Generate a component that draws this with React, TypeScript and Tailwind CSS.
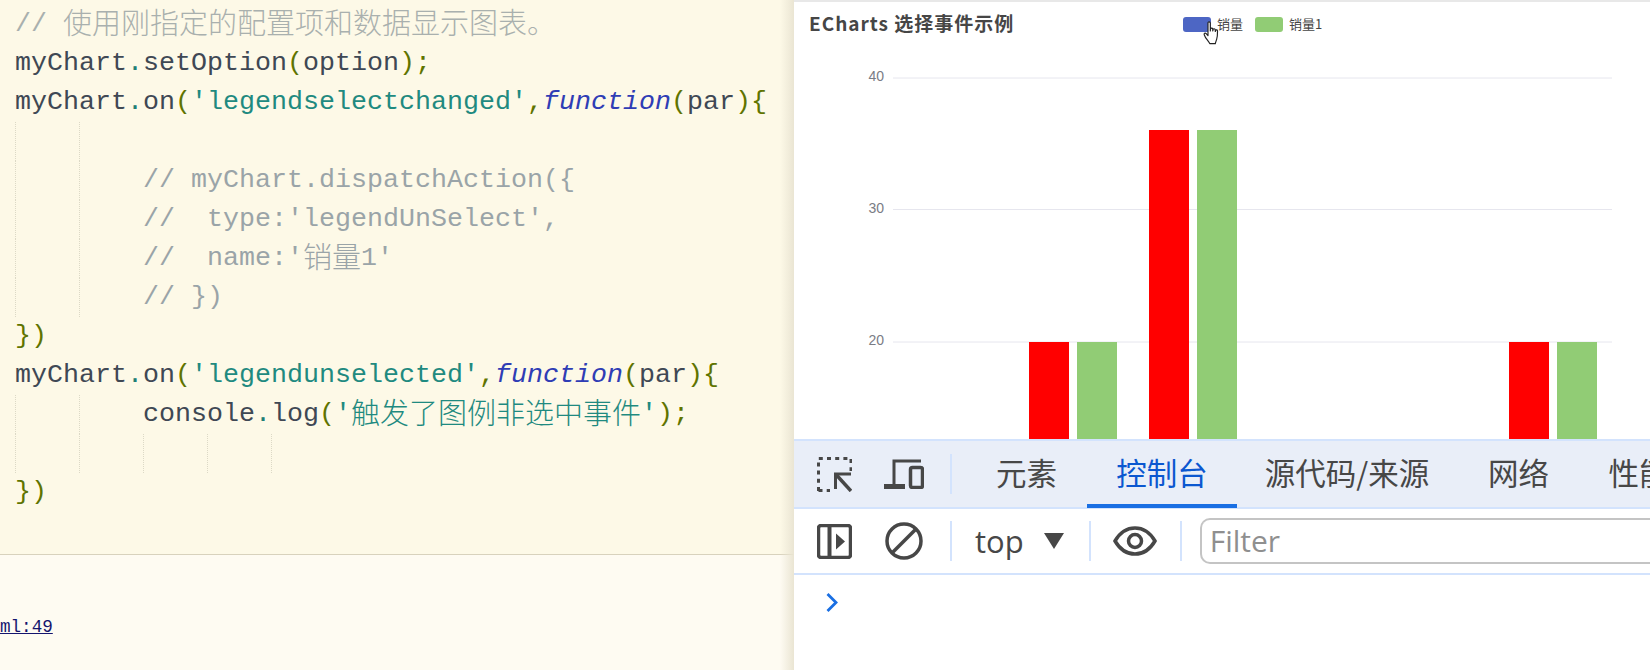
import React from "react";

const Cjk = ({ children }: { children: React.ReactNode }) => (
  <span className="relative top-[3px] font-['Noto_Sans_CJK_SC',sans-serif] text-[29px] leading-[20px] font-light">{children}</span>
);
const D = ({ children }: { children: React.ReactNode }) => <span className="text-[#3f4854]">{children}</span>;
const Dot = () => <span className="text-[#1f7f76]">.</span>;
const P = ({ children }: { children: React.ReactNode }) => <span className="text-[#5f7400]">{children}</span>;
const S = ({ children }: { children: React.ReactNode }) => <span className="text-[#1f8a80]">{children}</span>;
const F = () => <span className="text-[#2f3db5] italic">function</span>;

const Line = ({ guides = 0, children }: { guides?: number; children?: React.ReactNode }) => {
  const cells = Array.from({ length: guides });
  return (
    <div className="flex h-[39px] items-stretch pl-[15px] leading-[39px] whitespace-pre">
      {cells.map((_, i) => (
        <div key={i} className="h-full w-[64px] shrink-0 border-l border-dotted border-[#dcd9c6]" />
      ))}
      <div className="h-[39px]">{children}</div>
    </div>
  );
};

const Comment = ({ children }: { children: React.ReactNode }) => <span className="text-[#9aa4a8]">{children}</span>;

const CodePane = () => (
  <div className="relative flex h-full w-[794px] shrink-0 flex-col overflow-hidden bg-[#fdf9e7]">
    <div className="h-[555px] shrink-0 border-b border-[#d8d2bd] pt-[5px] font-['Liberation_Mono',monospace] text-[26.67px]">
      <Line>
        <span className="text-[#a9b0ae]">
          // <Cjk>使用刚指定的配置项和数据显示图表。</Cjk>
        </span>
      </Line>
      <Line>
        <D>myChart</D><Dot /><D>setOption</D><P>(</P><D>option</D><P>);</P>
      </Line>
      <Line>
        <D>myChart</D><Dot /><D>on</D><P>(</P><S>'legendselectchanged'</S><P>,</P><F /><P>(</P><D>par</D><P>){"{"}</P>
      </Line>
      <Line guides={2} />
      <Line guides={2}><Comment>// myChart.dispatchAction({"{"}</Comment></Line>
      <Line guides={2}><Comment>//  type:'legendUnSelect',</Comment></Line>
      <Line guides={2}><Comment>//  name:'<Cjk>销量</Cjk>1'</Comment></Line>
      <Line guides={2}><Comment>// {"})"}</Comment></Line>
      <Line><P>{"})"}</P></Line>
      <Line>
        <D>myChart</D><Dot /><D>on</D><P>(</P><S>'legendunselected'</S><P>,</P><F /><P>(</P><D>par</D><P>){"{"}</P>
      </Line>
      <Line guides={2}>
        <D>console</D><Dot /><D>log</D><P>(</P><S>'<Cjk>触发了图例非选中事件</Cjk>'</S><P>);</P>
      </Line>
      <Line guides={5} />
      <Line><P>{"})"}</P></Line>
    </div>
    <div className="flex-1 bg-[#fefbf2] pt-[62px]">
      <a className="block font-['Liberation_Mono',monospace] text-[17.6px] leading-[20px] text-[#14146e] underline">ml:49</a>
    </div>
    <div className="absolute top-0 right-0 bottom-0 w-[14px] bg-linear-to-r from-transparent to-[#eae5d3]" />
  </div>
);

const Bars = ({ x, top }: { x: number; top: number }) => (
  <>
    <rect x={x} y={top} width={40} height={439 - top} fill="#ff0000" />
    <rect x={x + 48} y={top} width={40} height={439 - top} fill="#91cc75" />
  </>
);

const Chart = () => (
  <div className="relative h-[439px] shrink-0 overflow-hidden border-t-2 border-[#e8e8e8] bg-white">
    <div className="flex h-[44px] items-center pl-[15px] font-['Noto_Sans_CJK_SC',sans-serif]">
      <div className="w-[374px] -translate-y-[1px] text-[19px] leading-[24px] font-bold tracking-[1px] whitespace-nowrap text-[#464646]">ECharts 选择事件示例</div>
      <div className="flex items-center text-[13px] leading-[15px] text-[#444]">
        <div className="h-[15px] w-[28px] rounded-[3px] bg-[#4d66c4]" />
        <span className="ml-[6px] w-[38px] -translate-y-[1px]">销量</span>
        <div className="h-[15px] w-[28px] rounded-[3px] bg-[#91cc75]" />
        <span className="ml-[6px] -translate-y-[1px]">销量1</span>
      </div>
    </div>
    <svg className="absolute top-0 left-0" width="856" height="437" viewBox="794 2 856 437">
      {[78, 209.5, 342].map((y) => (
        <line key={y} x1={893} x2={1612} y1={y} y2={y} stroke="#e6e6ee" strokeWidth={1} />
      ))}
      {[["40", 81], ["30", 213], ["20", 345]].map(([t, y]) => (
        <text key={t as string} x={884} y={y as number} textAnchor="end" fontFamily="'Liberation Sans',sans-serif" fontSize={14} fill="#7a7c85">
          {t}
        </text>
      ))}
      <Bars x={1029} top={342} />
      <Bars x={1149} top={130} />
      <Bars x={1509} top={342} />
    </svg>
    <svg className="absolute top-[19px] left-[409px]" width="18" height="25" viewBox="0 0 20 28" fill="white" stroke="#222" strokeWidth="1.3" strokeLinejoin="round">
      <path d="M5.5 2.2c0-1.6 2.6-1.6 2.6 0v9l.2-2.3c0-1.3 2.4-1.3 2.5 0l.1 2.3.3-1.7c.2-1.2 2.3-1 2.4.2l.1 2 .4-1.2c.4-1 2.1-.6 2.1.6 0 4-.2 7-1 9.500-.6 2-1.500 3.800-1.500 4.800H7.500c-.5-1.500-1.500-2.500-3-4.500-1.200-1.500-2.500-3.500-3.200-5.500-.6-1.500 1-2.500 2.200-1.300l2 2.200V2.200z" />
    </svg>
  </div>
);

const InspectIcon = () => (
  <svg className="shrink-0" width="35" height="35" viewBox="0 0 35 35" fill="none" stroke="#474747">
    <path d="M1.500 34V1.500H34V14" strokeWidth="3" strokeDasharray="4 4.200" />
    <path d="M1.500 33.500H13" strokeWidth="3" strokeDasharray="4 4.200" />
    <path d="M34 17H18.500V32" strokeWidth="3" />
    <path d="M19 17.500L34 34" strokeWidth="3.500" />
  </svg>
);
const DeviceIcon = () => (
  <svg className="shrink-0" width="40" height="30" viewBox="0 0 40 30" fill="none" stroke="#474747" strokeWidth="3">
    <path d="M10 26V2H37" />
    <path d="M0 27.500H21" strokeWidth="5" />
    <rect x="26.500" y="8.500" width="12" height="20" rx="2" strokeWidth="3.500" />
  </svg>
);
const SidebarIcon = () => (
  <svg className="shrink-0" width="35" height="35" viewBox="0 0 35 35" fill="none">
    <rect x="1.500" y="1.500" width="32" height="32" rx="2.500" stroke="#474747" strokeWidth="3.500" />
    <path d="M12.500 2V33" stroke="#474747" strokeWidth="4" />
    <path d="M19 9.500L28 17.500L19 25.500Z" fill="#474747" />
  </svg>
);
const ClearIcon = () => (
  <svg className="shrink-0" width="38" height="38" viewBox="0 0 38 38" fill="none" stroke="#474747" strokeWidth="3.500">
    <circle cx="19" cy="19" r="17" />
    <path d="M7 31L31 7" />
  </svg>
);
const EyeIcon = () => (
  <svg className="shrink-0" width="44" height="30" viewBox="0 0 44 30" fill="none" stroke="#474747" strokeWidth="3.500">
    <path d="M2 15C7 6.500 14 2 22 2s15 4.500 20 13c-5 8.500-12 13-20 13S7 23.500 2 15Z" />
    <circle cx="22" cy="15" r="6.500" />
  </svg>
);
const Sep = ({ className }: { className: string }) => <div className={`h-[40px] w-[2px] shrink-0 bg-[#d3e3fd] ${className}`} />;

const Tab = ({ label, w, active }: { label: string; w: string; active?: boolean }) => (
  <div
    className={`flex h-full shrink-0 items-center justify-center border-b-4 ${w} ${
      active ? "border-[#1a6fe3] text-[#0b57d0]" : "border-transparent text-[#474747]"
    }`}
  >
    {label}
  </div>
);

const DevTools = () => (
  <div className="flex flex-1 flex-col overflow-hidden bg-white">
    <div className="flex h-[70px] shrink-0 items-center border-y-2 border-[#d3e3fd] bg-[#e9eef8] pl-[23px] font-['Noto_Sans_CJK_SC',sans-serif] text-[30.500px] leading-none">
      <InspectIcon />
      <div className="ml-[32px] shrink-0"><DeviceIcon /></div>
      <Sep className="ml-[26px]" />
      <div className="ml-[14px] flex h-[68px] shrink-0 items-center whitespace-nowrap">
        <Tab label="元素" w="w-[121px]" />
        <Tab label="控制台" w="w-[150px]" active />
        <Tab label="源代码/来源" w="w-[220px]" />
        <Tab label="网络" w="w-[123px]" />
        <Tab label="性能" w="w-[118px]" />
      </div>
    </div>
    <div className="flex h-[66px] shrink-0 items-center border-b-2 border-[#d3e3fd] pl-[23px] font-['Open_Sans',sans-serif]">
      <SidebarIcon />
      <div className="ml-[33px] shrink-0"><ClearIcon /></div>
      <Sep className="ml-[27px]" />
      <span className="ml-[23px] text-[31px] leading-none text-[#474747]">top</span>
      <svg className="ml-[20px] shrink-0" width="20" height="16" viewBox="0 0 20 16"><path d="M0 0H20L10 16Z" fill="#474747" /></svg>
      <Sep className="ml-[25px]" />
      <div className="ml-[22px] shrink-0"><EyeIcon /></div>
      <Sep className="ml-[23px]" />
      <div className="ml-[18px] flex h-[46px] flex-1 items-center rounded-l-[10px] border-2 border-r-0 border-[#c4c4c4] pl-[8px] text-[30px] leading-none text-[#8f8f8f]">
        Filter
      </div>
    </div>
    <div className="pt-[18px] pl-[32px]">
      <svg width="12" height="19" viewBox="0 0 12 19" fill="none" stroke="#1a6fe3" strokeWidth="2.800"><path d="M1.500 1L10 9.500L1.500 18" /></svg>
    </div>
  </div>
);

export default function App() {
  return (
    <div className="flex h-[670px] w-[1650px] overflow-hidden">
      <CodePane />
      <div className="flex w-[856px] shrink-0 flex-col">
        <Chart />
        <DevTools />
      </div>
    </div>
  );
}
